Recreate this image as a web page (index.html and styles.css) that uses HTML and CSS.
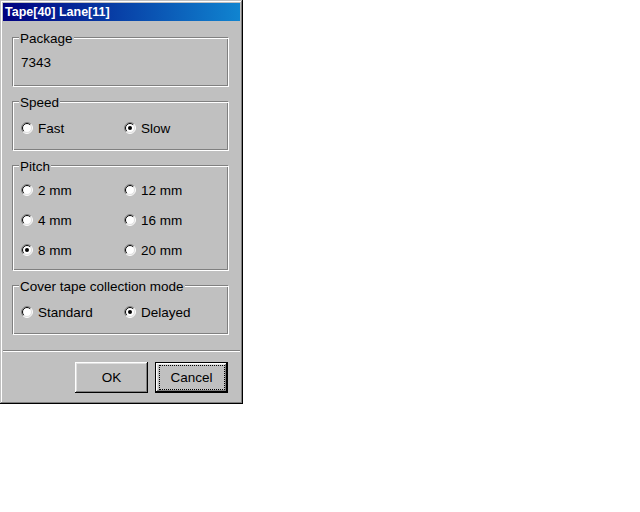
FILE: index.html
```html
<!DOCTYPE html>
<html>
<head>
<meta charset="utf-8">
<title>Tape[40] Lane[11]</title>
<link rel="stylesheet" href="styles.css">
</head>
<body>
<div class="window">
  <div class="titlebar">Tape[40] Lane[11]</div>
  <div class="content">
    <div class="group group-package">
      <span class="legend">Package</span>
      <div class="value">7343</div>
    </div>

    <div class="group group-short">
      <span class="legend">Speed</span>
      <div class="grid">
        <label class="radio"><svg class="rb" viewBox="0 0 12 12" width="12" height="12"><circle cx="6" cy="6" r="5" fill="#fff"/><path d="M2.111 9.889A5.5 5.5 0 0 1 9.889 2.111" fill="none" stroke="#808080"/><path d="M9.889 2.111A5.5 5.5 0 0 1 2.111 9.889" fill="none" stroke="#fff"/><path d="M2.818 9.182A4.5 4.5 0 0 1 9.182 2.818" fill="none" stroke="#000"/><path d="M9.182 2.818A4.5 4.5 0 0 1 2.818 9.182" fill="none" stroke="#dfdfdf"/></svg><span class="txt">Fast</span></label>
        <label class="radio"><svg class="rb" viewBox="0 0 12 12" width="12" height="12"><circle cx="6" cy="6" r="5" fill="#fff"/><path d="M2.111 9.889A5.5 5.5 0 0 1 9.889 2.111" fill="none" stroke="#808080"/><path d="M9.889 2.111A5.5 5.5 0 0 1 2.111 9.889" fill="none" stroke="#fff"/><path d="M2.818 9.182A4.5 4.5 0 0 1 9.182 2.818" fill="none" stroke="#000"/><path d="M9.182 2.818A4.5 4.5 0 0 1 2.818 9.182" fill="none" stroke="#dfdfdf"/><circle cx="6" cy="6" r="2" fill="#000"/></svg><span class="txt">Slow</span></label>
      </div>
    </div>

    <div class="group group-pitch">
      <span class="legend">Pitch</span>
      <div class="grid grid-pitch">
        <label class="radio"><svg class="rb" viewBox="0 0 12 12" width="12" height="12"><circle cx="6" cy="6" r="5" fill="#fff"/><path d="M2.111 9.889A5.5 5.5 0 0 1 9.889 2.111" fill="none" stroke="#808080"/><path d="M9.889 2.111A5.5 5.5 0 0 1 2.111 9.889" fill="none" stroke="#fff"/><path d="M2.818 9.182A4.5 4.5 0 0 1 9.182 2.818" fill="none" stroke="#000"/><path d="M9.182 2.818A4.5 4.5 0 0 1 2.818 9.182" fill="none" stroke="#dfdfdf"/></svg><span class="txt">2 mm</span></label>
        <label class="radio"><svg class="rb" viewBox="0 0 12 12" width="12" height="12"><circle cx="6" cy="6" r="5" fill="#fff"/><path d="M2.111 9.889A5.5 5.5 0 0 1 9.889 2.111" fill="none" stroke="#808080"/><path d="M9.889 2.111A5.5 5.5 0 0 1 2.111 9.889" fill="none" stroke="#fff"/><path d="M2.818 9.182A4.5 4.5 0 0 1 9.182 2.818" fill="none" stroke="#000"/><path d="M9.182 2.818A4.5 4.5 0 0 1 2.818 9.182" fill="none" stroke="#dfdfdf"/></svg><span class="txt">12 mm</span></label>
        <label class="radio"><svg class="rb" viewBox="0 0 12 12" width="12" height="12"><circle cx="6" cy="6" r="5" fill="#fff"/><path d="M2.111 9.889A5.5 5.5 0 0 1 9.889 2.111" fill="none" stroke="#808080"/><path d="M9.889 2.111A5.5 5.5 0 0 1 2.111 9.889" fill="none" stroke="#fff"/><path d="M2.818 9.182A4.5 4.5 0 0 1 9.182 2.818" fill="none" stroke="#000"/><path d="M9.182 2.818A4.5 4.5 0 0 1 2.818 9.182" fill="none" stroke="#dfdfdf"/></svg><span class="txt">4 mm</span></label>
        <label class="radio"><svg class="rb" viewBox="0 0 12 12" width="12" height="12"><circle cx="6" cy="6" r="5" fill="#fff"/><path d="M2.111 9.889A5.5 5.5 0 0 1 9.889 2.111" fill="none" stroke="#808080"/><path d="M9.889 2.111A5.5 5.5 0 0 1 2.111 9.889" fill="none" stroke="#fff"/><path d="M2.818 9.182A4.5 4.5 0 0 1 9.182 2.818" fill="none" stroke="#000"/><path d="M9.182 2.818A4.5 4.5 0 0 1 2.818 9.182" fill="none" stroke="#dfdfdf"/></svg><span class="txt">16 mm</span></label>
        <label class="radio"><svg class="rb" viewBox="0 0 12 12" width="12" height="12"><circle cx="6" cy="6" r="5" fill="#fff"/><path d="M2.111 9.889A5.5 5.5 0 0 1 9.889 2.111" fill="none" stroke="#808080"/><path d="M9.889 2.111A5.5 5.5 0 0 1 2.111 9.889" fill="none" stroke="#fff"/><path d="M2.818 9.182A4.5 4.5 0 0 1 9.182 2.818" fill="none" stroke="#000"/><path d="M9.182 2.818A4.5 4.5 0 0 1 2.818 9.182" fill="none" stroke="#dfdfdf"/><circle cx="6" cy="6" r="2" fill="#000"/></svg><span class="txt">8 mm</span></label>
        <label class="radio"><svg class="rb" viewBox="0 0 12 12" width="12" height="12"><circle cx="6" cy="6" r="5" fill="#fff"/><path d="M2.111 9.889A5.5 5.5 0 0 1 9.889 2.111" fill="none" stroke="#808080"/><path d="M9.889 2.111A5.5 5.5 0 0 1 2.111 9.889" fill="none" stroke="#fff"/><path d="M2.818 9.182A4.5 4.5 0 0 1 9.182 2.818" fill="none" stroke="#000"/><path d="M9.182 2.818A4.5 4.5 0 0 1 2.818 9.182" fill="none" stroke="#dfdfdf"/></svg><span class="txt">20 mm</span></label>
      </div>
    </div>

    <div class="group group-short">
      <span class="legend">Cover tape collection mode</span>
      <div class="grid">
        <label class="radio"><svg class="rb" viewBox="0 0 12 12" width="12" height="12"><circle cx="6" cy="6" r="5" fill="#fff"/><path d="M2.111 9.889A5.5 5.5 0 0 1 9.889 2.111" fill="none" stroke="#808080"/><path d="M9.889 2.111A5.5 5.5 0 0 1 2.111 9.889" fill="none" stroke="#fff"/><path d="M2.818 9.182A4.5 4.5 0 0 1 9.182 2.818" fill="none" stroke="#000"/><path d="M9.182 2.818A4.5 4.5 0 0 1 2.818 9.182" fill="none" stroke="#dfdfdf"/></svg><span class="txt">Standard</span></label>
        <label class="radio"><svg class="rb" viewBox="0 0 12 12" width="12" height="12"><circle cx="6" cy="6" r="5" fill="#fff"/><path d="M2.111 9.889A5.5 5.5 0 0 1 9.889 2.111" fill="none" stroke="#808080"/><path d="M9.889 2.111A5.5 5.5 0 0 1 2.111 9.889" fill="none" stroke="#fff"/><path d="M2.818 9.182A4.5 4.5 0 0 1 9.182 2.818" fill="none" stroke="#000"/><path d="M9.182 2.818A4.5 4.5 0 0 1 2.818 9.182" fill="none" stroke="#dfdfdf"/><circle cx="6" cy="6" r="2" fill="#000"/></svg><span class="txt">Delayed</span></label>
      </div>
    </div>
  </div>
  <div class="separator"></div>
  <div class="buttons">
    <button class="btn">OK</button>
    <button class="btn btn-default">Cancel</button>
  </div>
</div>
</body>
</html>
```
FILE: styles.css
```css
html, body {
  margin: 0;
  padding: 0;
  background: #ffffff;
}

body {
  font-family: "Liberation Sans", Arial, sans-serif;
  font-size: 13.5px;
  color: #000;
}

.window {
  box-sizing: border-box;
  width: 243px;
  height: 404px;
  padding: 3px;
  background: #c0c0c0;
  box-shadow: inset -1px -1px 0 #000, inset 1px 1px 0 #c0c0c0,
              inset -2px -2px 0 #808080, inset 2px 2px 0 #fff;
  display: flex;
  flex-direction: column;
}

.titlebar {
  height: 18px;
  line-height: 18px;
  padding-left: 2px;
  background: linear-gradient(to right, #000080, #1084d0);
  color: #fff;
  font-weight: bold;
  font-size: 12.5px;
  white-space: nowrap;
}

.content {
  padding: 16px 0 0 9px;
  display: flex;
  flex-direction: column;
  gap: 14px;
}

.group {
  position: relative;
  box-sizing: border-box;
  width: 217px;
  border: 1px solid;
  border-color: #808080 #fff #fff #808080;
  box-shadow: inset 1px 1px 0 #fff, inset -1px -1px 0 #808080;
}

.group-package {
  height: 50px;
  padding: 18px 0 0 8px;
}

.group-short {
  height: 50px;
  padding: 19px 0 0 8px;
}

.group-pitch {
  height: 106px;
  padding: 17px 0 0 8px;
}

.legend {
  position: absolute;
  top: -6px;
  left: 6px;
  padding: 0 1px;
  background: #c0c0c0;
  line-height: 14px;
  white-space: nowrap;
}

.value {
  line-height: 14px;
}

.grid {
  display: grid;
  grid-template-columns: 103px auto;
  row-gap: 16px;
}

.radio {
  display: flex;
  align-items: flex-start;
  height: 14px;
  white-space: nowrap;
}

.rb {
  display: block;
  flex: none;
  margin-top: 1px;
  margin-right: 5px;
}

.txt {
  line-height: 14px;
  padding-top: 1px;
}

.separator {
  margin-top: 15px;
  height: 1px;
  background: #808080;
  border-bottom: 1px solid #fff;
}

.buttons {
  display: flex;
  justify-content: flex-end;
  gap: 7px;
  margin-top: 10px;
  padding-right: 12px;
}

.btn {
  position: relative;
  box-sizing: border-box;
  width: 73px;
  height: 31px;
  padding: 0 0 1px;
  margin: 0;
  border: none;
  background: #c0c0c0;
  font-family: "Liberation Sans", Arial, sans-serif;
  font-size: 13.5px;
  color: #000;
  box-shadow: inset -1px -1px 0 #000, inset 1px 1px 0 #fff,
              inset -2px -2px 0 #808080, inset 2px 2px 0 #dfdfdf;
}

.btn-default {
  border: 1px solid #000;
}

.btn-default::after {
  content: "";
  position: absolute;
  top: 2px;
  left: 3px;
  right: 2px;
  bottom: 2px;
  border: 1px dotted #000;
}
```
